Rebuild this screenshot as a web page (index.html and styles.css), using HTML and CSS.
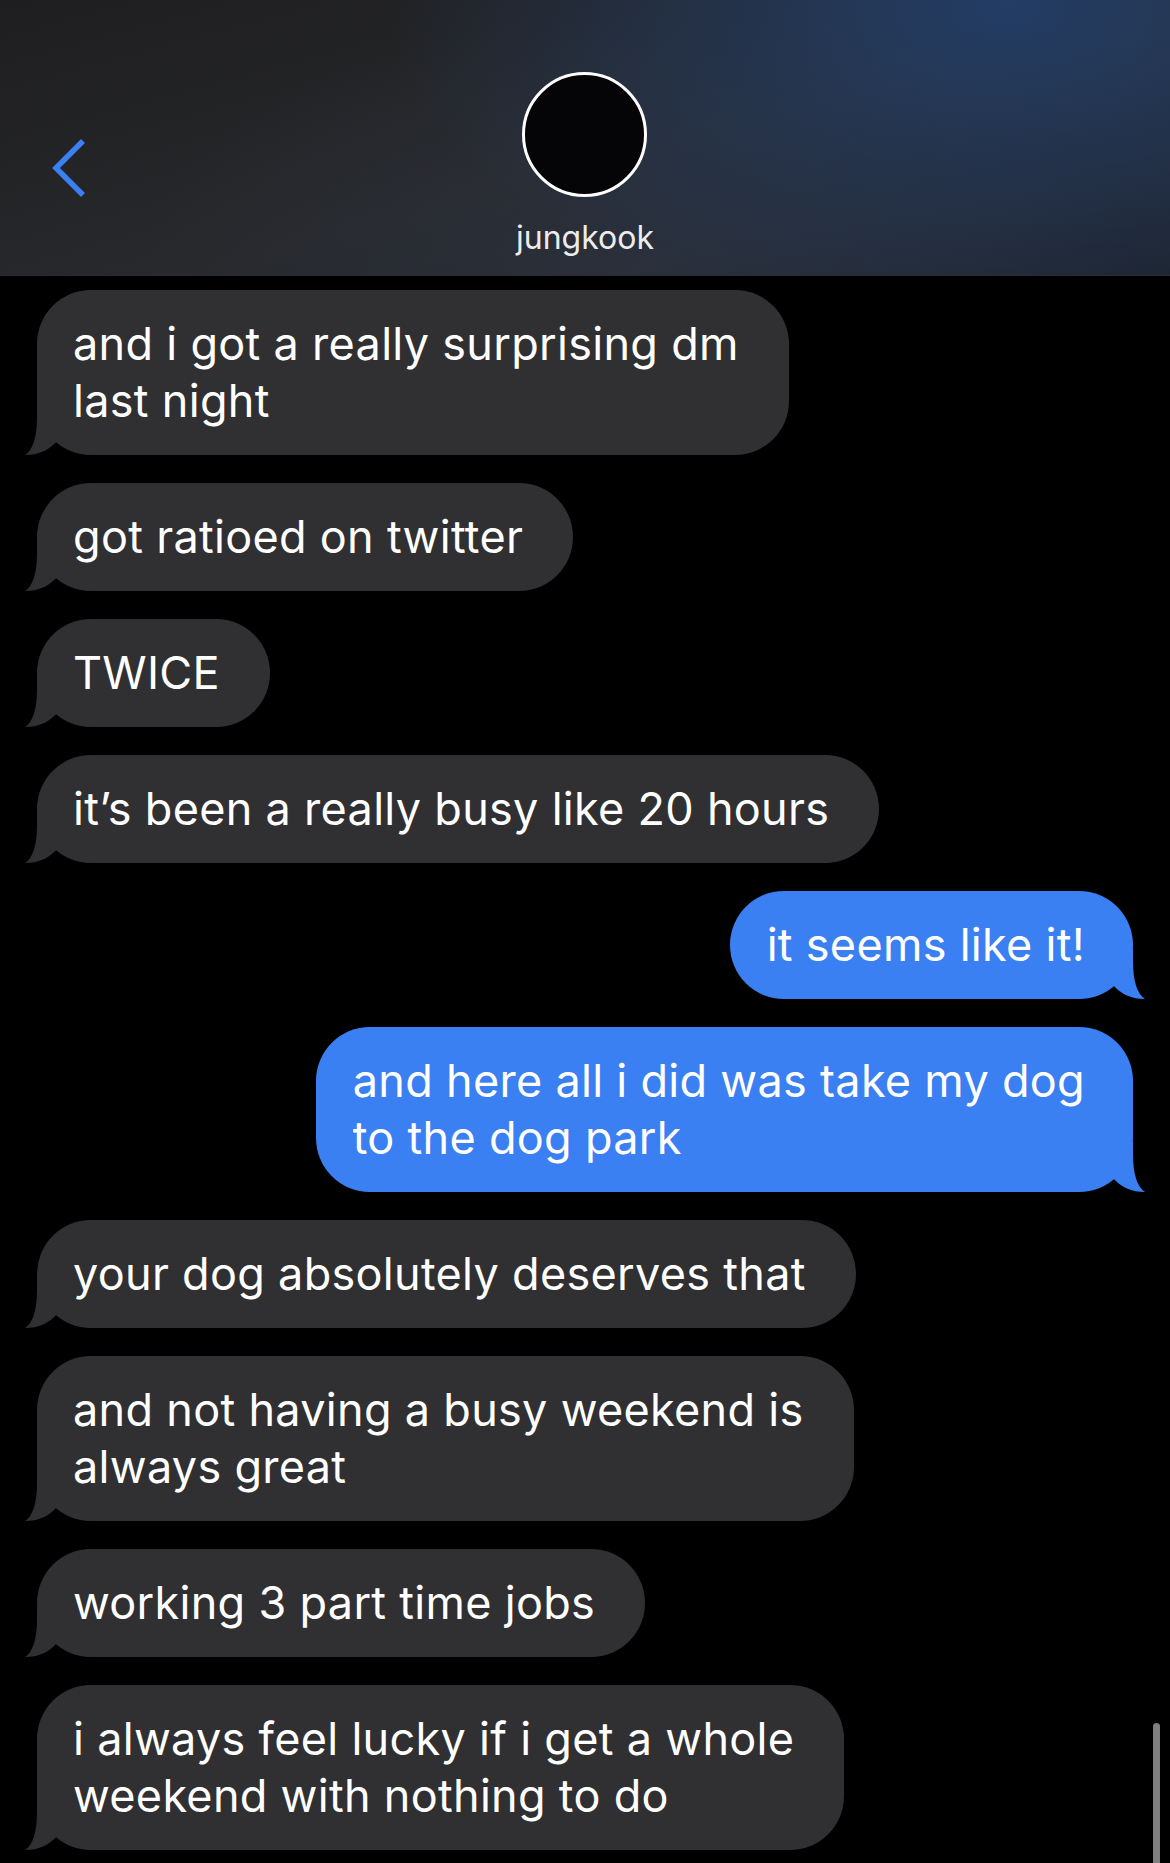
FILE: index.html
```html
<!DOCTYPE html>
<html lang="en">
  <head>
    <meta charset="UTF-8" />
    <title>jungkook</title>
    <link rel="stylesheet" href="styles.css">
  </head>
  <body>
    <header class="top-bar">
      <a class="back" href="#">
        <svg width="40" height="60" viewBox="0 0 40 60">
          <path d="M33 3 L6 30 L33 57" />
        </svg>
      </a>
      <div class="contact">
        <div class="avatar"></div>
        <div class="name">jungkook</div>
      </div>
    </header>

    <main class="thread">
      <div class="bubble in">and i got a really surprising dm<br />last night</div>
      <div class="bubble in">got ratioed on twitter</div>
      <div class="bubble in">TWICE</div>
      <div class="bubble in">it’s been a really busy like 20 hours</div>
      <div class="bubble out">it seems like it!</div>
      <div class="bubble out">and here all i did was take my dog<br />to the dog park</div>
      <div class="bubble in">your dog absolutely deserves that</div>
      <div class="bubble in">and not having a busy weekend is<br />always great</div>
      <div class="bubble in">working 3 part time jobs</div>
      <div class="bubble in">i always feel lucky if i get a whole<br />weekend with nothing to do</div>
    </main>

    <div class="scroll-thumb"></div>
  </body>
</html>
```

FILE: styles.css
```css
* {
  box-sizing: border-box;
}
body {
  margin: 0;
  height: 1863px;
  overflow: hidden;
  background: #000;
  color: #fff;
  font-family: Inter, "Noto Sans", sans-serif;
}

/* nav bar */
.top-bar {
  height: 276px;
  display: grid;
  grid-template-columns: 1fr auto 1fr;
  border-bottom: 1px solid #2a2c31;
  background:
    radial-gradient(ellipse 620px 330px at 86% 2%, rgba(35, 62, 104, 0.95), rgba(35, 62, 104, 0) 100%),
    radial-gradient(ellipse 500px 260px at 55% 100%, rgba(44, 50, 62, 0.8), rgba(44, 50, 62, 0) 100%),
    linear-gradient(165deg, #1e1e20 0%, #28292c 55%, #1d222c 100%);
}
.back {
  padding: 138px 0 0 50px;
}
.back path {
  fill: none;
  stroke: #3a80f2;
  stroke-width: 5.5;
}
.contact {
  display: flex;
  flex-direction: column;
  align-items: center;
  padding-top: 72px;
}
.avatar {
  width: 125px;
  height: 125px;
  border-radius: 50%;
  border: 3px solid #fff;
  background: #050507;
}
.name {
  margin-top: 22px;
  font-size: 32px;
  line-height: 38px;
  color: #ececec;
}

/* messages */
.thread {
  display: flex;
  flex-direction: column;
  gap: 28px;
  padding: 14px 37px 0;
}
.bubble {
  position: relative;
  padding: 25px 50px 26px 36px;
  border-radius: 54px;
  font-size: 45px;
  line-height: 57px;
  letter-spacing: 0.3px;
  white-space: nowrap;
}
.bubble::after {
  content: "";
  position: absolute;
  bottom: 0;
  width: 34px;
  height: 50px;
  background: inherit;
}
.bubble.in {
  align-self: flex-start;
  background: #303032;
}
.bubble.in::after {
  left: -12px;
  clip-path: path("M12,0 L12,12 Q12,42 0,50 Q20,50 32,36 L32,0 Z");
}
.bubble.out {
  align-self: flex-end;
  padding: 25px 48px 26px 37px;
  background: #3b80f3;
}
.bubble.out::after {
  right: -12px;
  clip-path: path("M22,0 L22,12 Q22,42 34,50 Q14,50 2,36 L2,0 Z");
}

.scroll-thumb {
  position: fixed;
  top: 1723px;
  right: 10px;
  bottom: 0;
  width: 7px;
  border-radius: 4px 4px 0 0;
  background: #7f7f7f;
}
```
